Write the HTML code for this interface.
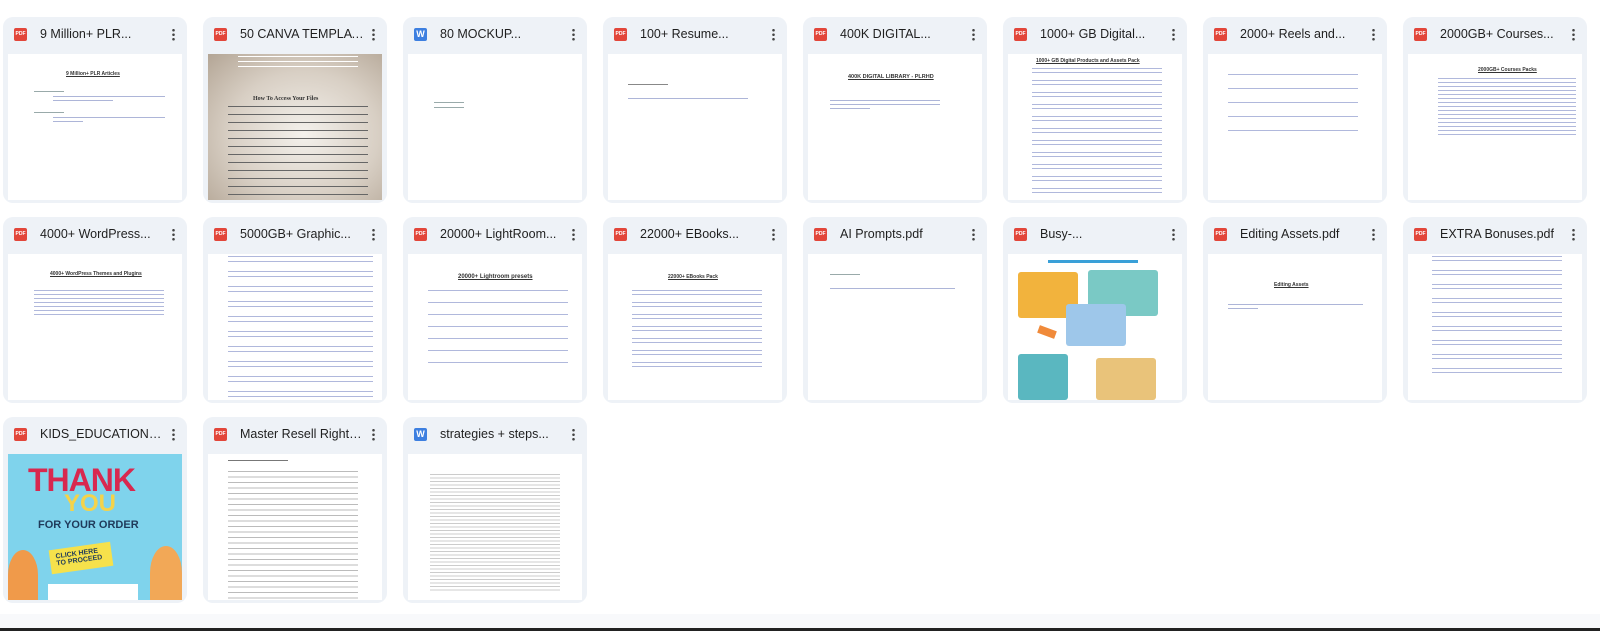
<!DOCTYPE html>
<html><head><meta charset="utf-8"><style>
*{box-sizing:border-box;margin:0;padding:0}
body{width:1600px;height:631px;background:#fff;font-family:"Liberation Sans",Arial,sans-serif;position:relative;overflow:hidden}
.card{position:absolute;width:184px;height:186px;background:#eef2f7;border-radius:10px}
.hd{position:absolute;left:0;top:0;width:184px;height:36px}
.ic{position:absolute;left:11px;top:11px;width:13px;height:13px;border-radius:2px;background:#e2463a;color:#fff;font-size:5px;font-weight:bold;text-align:center;line-height:13px}
.ic.w{background:#3d7fe0;font-size:9px}
.nm{position:absolute;left:37px;top:10px;width:124px;font-size:12.5px;color:#1f1f1f;white-space:nowrap;overflow:hidden;text-overflow:ellipsis}
.dots{position:absolute;right:12px;top:11px;width:3px;height:13px;background:radial-gradient(circle,#444 1.2px,transparent 1.4px) 0 0/3px 4.5px repeat-y}
.th{position:absolute;left:5px;top:37px;width:174px;height:146px;background:#fff;overflow:hidden}
.t{position:absolute;font-size:5px;color:#333;font-weight:bold;text-decoration:underline;white-space:nowrap}
.ln{position:absolute;height:1px;background:#8a96c8;opacity:.7}
.tx{position:absolute;background:repeating-linear-gradient(#9aa 0 1px,transparent 1px 5px)}
.foot{position:absolute;left:0;top:614px;width:1600px;height:14px;background:#f8f9fb}
.bar{position:absolute;left:0;top:628px;width:1600px;height:3px;background:#222}
</style></head><body>

<div class="card" style="left:3px;top:17px"><div class="hd"><div class="ic">PDF</div><div class="nm">9 Million+ PLR...</div><div class="dots"></div></div>
<div class="th"><div class="t" style="left:58px;top:17px">9 Million+ PLR Articles</div><div class="ln" style="left:45px;top:42px;width:112px"></div><div class="ln" style="left:45px;top:46px;width:60px"></div><div class="ln" style="left:45px;top:63px;width:112px"></div><div class="ln" style="left:45px;top:67px;width:30px"></div><div class="tx" style="left:26px;top:37px;width:30px;height:2px"></div><div class="tx" style="left:26px;top:58px;width:30px;height:2px"></div></div></div>

<div class="card" style="left:203px;top:17px"><div class="hd"><div class="ic">PDF</div><div class="nm">50 CANVA TEMPLATES</div><div class="dots"></div></div>
<div class="th" style="background:radial-gradient(ellipse at 55% 55%,#f4f1ec 0%,#d8cfc4 55%,#b3a595 100%)"><div style="position:absolute;left:45px;top:42px;font-size:6px;font-weight:bold;color:#333;font-family:'Liberation Serif',serif">How To Access Your Files</div><div class="tx" style="left:20px;top:52px;width:140px;height:92px;background:repeating-linear-gradient(#666 0 1px,transparent 1px 8px)"></div><div class="tx" style="left:30px;top:2px;width:120px;height:14px;background:repeating-linear-gradient(#fff 0 1px,transparent 1px 5px)"></div></div></div>

<div class="card" style="left:403px;top:17px"><div class="hd"><div class="ic w">W</div><div class="nm">80 MOCKUP...</div><div class="dots"></div></div>
<div class="th"><div class="tx" style="left:26px;top:48px;width:30px;height:6px"></div></div></div>

<div class="card" style="left:603px;top:17px"><div class="hd"><div class="ic">PDF</div><div class="nm">100+ Resume...</div><div class="dots"></div></div>
<div class="th"><div class="tx" style="left:20px;top:30px;width:40px;height:1px;background:#888"></div><div class="ln" style="left:20px;top:44px;width:120px"></div></div></div>

<div class="card" style="left:803px;top:17px"><div class="hd"><div class="ic">PDF</div><div class="nm">400K DIGITAL...</div><div class="dots"></div></div>
<div class="th"><div class="t" style="left:40px;top:20px;font-size:5.5px">400K DIGITAL LIBRARY - PLRHD</div><div class="ln" style="left:22px;top:46px;width:110px"></div><div class="ln" style="left:22px;top:50px;width:110px"></div><div class="ln" style="left:22px;top:54px;width:40px"></div></div></div>

<div class="card" style="left:1003px;top:17px"><div class="hd"><div class="ic">PDF</div><div class="nm">1000+ GB Digital...</div><div class="dots"></div></div>
<div class="th"><div class="t" style="left:28px;top:4px">1000+ GB Digital Products and Assets Pack</div><div class="tx" style="left:24px;top:14px;width:130px;height:132px;background:repeating-linear-gradient(#b0b8dc 0 1px,transparent 1px 4px,#b0b8dc 4px 5px,transparent 5px 12px)"></div></div></div>

<div class="card" style="left:1203px;top:17px"><div class="hd"><div class="ic">PDF</div><div class="nm">2000+ Reels and...</div><div class="dots"></div></div>
<div class="th"><div class="tx" style="left:20px;top:20px;width:130px;height:60px;background:repeating-linear-gradient(#b0b8dc 0 1px,transparent 1px 14px)"></div></div></div>

<div class="card" style="left:1403px;top:17px"><div class="hd"><div class="ic">PDF</div><div class="nm">2000GB+ Courses...</div><div class="dots"></div></div>
<div class="th"><div class="t" style="left:70px;top:13px">2000GB+ Courses Packs</div><div class="tx" style="left:30px;top:24px;width:138px;height:60px;background:repeating-linear-gradient(#b0b8dc 0 1px,transparent 1px 4px)"></div></div></div>

<div class="card" style="left:3px;top:217px"><div class="hd"><div class="ic">PDF</div><div class="nm">4000+ WordPress...</div><div class="dots"></div></div>
<div class="th"><div class="t" style="left:42px;top:17px">4000+ WordPress Themes and Plugins</div><div class="tx" style="left:26px;top:36px;width:130px;height:28px;background:repeating-linear-gradient(#b0b8dc 0 1px,transparent 1px 4px)"></div></div></div>

<div class="card" style="left:203px;top:217px"><div class="hd"><div class="ic">PDF</div><div class="nm">5000GB+ Graphic...</div><div class="dots"></div></div>
<div class="th"><div class="tx" style="left:20px;top:2px;width:145px;height:144px;background:repeating-linear-gradient(#b0b8dc 0 1px,transparent 1px 5px,#b0b8dc 5px 6px,transparent 6px 15px)"></div></div></div>

<div class="card" style="left:403px;top:217px"><div class="hd"><div class="ic">PDF</div><div class="nm">20000+ LightRoom...</div><div class="dots"></div></div>
<div class="th"><div class="t" style="left:50px;top:20px;font-size:6px">20000+ Lightroom presets</div><div class="tx" style="left:20px;top:36px;width:140px;height:80px;background:repeating-linear-gradient(#b0b8dc 0 1px,transparent 1px 12px)"></div></div></div>

<div class="card" style="left:603px;top:217px"><div class="hd"><div class="ic">PDF</div><div class="nm">22000+ EBooks...</div><div class="dots"></div></div>
<div class="th"><div class="t" style="left:60px;top:20px">22000+ EBooks Pack</div><div class="tx" style="left:24px;top:36px;width:130px;height:84px;background:repeating-linear-gradient(#b0b8dc 0 1px,transparent 1px 4px,#b0b8dc 4px 5px,transparent 5px 12px)"></div></div></div>

<div class="card" style="left:803px;top:217px"><div class="hd"><div class="ic">PDF</div><div class="nm">AI Prompts.pdf</div><div class="dots"></div></div>
<div class="th"><div class="tx" style="left:22px;top:20px;width:30px;height:2px"></div><div class="ln" style="left:22px;top:34px;width:125px"></div></div></div>

<div class="card" style="left:1003px;top:217px"><div class="hd"><div class="ic">PDF</div><div class="nm">Busy-...</div><div class="dots"></div></div>
<div class="th"><div style="position:absolute;left:40px;top:6px;width:90px;height:3px;background:#3aa0d8"></div>
<div style="position:absolute;left:10px;top:18px;width:60px;height:46px;background:#f2b33d;border-radius:3px"></div>
<div style="position:absolute;left:80px;top:16px;width:70px;height:46px;background:#7ac9c5;border-radius:3px"></div>
<div style="position:absolute;left:58px;top:50px;width:60px;height:42px;background:#9ec7ea;border-radius:3px"></div>
<div style="position:absolute;left:10px;top:100px;width:50px;height:46px;background:#5ab7c0;border-radius:3px"></div>
<div style="position:absolute;left:88px;top:104px;width:60px;height:42px;background:#e9c37a;border-radius:3px"></div>
<div style="position:absolute;left:30px;top:74px;width:18px;height:8px;background:#f08a3a;transform:rotate(20deg)"></div></div></div>

<div class="card" style="left:1203px;top:217px"><div class="hd"><div class="ic">PDF</div><div class="nm">Editing Assets.pdf</div><div class="dots"></div></div>
<div class="th"><div class="t" style="left:66px;top:28px">Editing Assets</div><div class="ln" style="left:20px;top:50px;width:135px"></div><div class="ln" style="left:20px;top:54px;width:30px"></div></div></div>

<div class="card" style="left:1403px;top:217px"><div class="hd"><div class="ic">PDF</div><div class="nm">EXTRA Bonuses.pdf</div><div class="dots"></div></div>
<div class="th"><div class="tx" style="left:24px;top:2px;width:130px;height:125px;background:repeating-linear-gradient(#b0b8dc 0 1px,transparent 1px 4px,#b0b8dc 4px 5px,transparent 5px 14px)"></div></div></div>

<div class="card" style="left:3px;top:417px"><div class="hd"><div class="ic">PDF</div><div class="nm">KIDS_EDUCATIONAL_PACK</div><div class="dots"></div></div>
<div class="th" style="background:#7fd3ec"><div style="position:absolute;left:20px;top:8px;font-size:32px;font-weight:bold;color:#d8284f;letter-spacing:-1px">THANK</div><div style="position:absolute;left:56px;top:36px;font-size:24px;font-weight:bold;color:#f4d34a">YOU</div><div style="position:absolute;left:30px;top:65px;font-size:11px;font-weight:bold;color:#1f3a5a">FOR YOUR ORDER</div><div style="position:absolute;left:42px;top:92px;width:62px;height:24px;background:#f6e14b;transform:rotate(-8deg);font-size:7px;font-weight:bold;color:#1f3a5a;padding:4px 6px">CLICK HERE TO PROCEED</div><div style="position:absolute;left:0;top:96px;width:30px;height:50px;background:#f09a4a;border-radius:50% 50% 0 0"></div><div style="position:absolute;left:142px;top:92px;width:32px;height:54px;background:#f2a857;border-radius:50% 50% 0 0"></div><div style="position:absolute;left:40px;top:130px;width:90px;height:16px;background:#fff"></div></div></div>

<div class="card" style="left:203px;top:417px"><div class="hd"><div class="ic">PDF</div><div class="nm">Master Resell Rights...</div><div class="dots"></div></div>
<div class="th"><div class="tx" style="left:20px;top:6px;width:60px;height:1px;background:#777"></div><div class="tx" style="left:20px;top:17px;width:130px;height:129px;background:repeating-linear-gradient(#bbb 0 1px,transparent 1px 5.5px)"></div></div></div>

<div class="card" style="left:403px;top:417px"><div class="hd"><div class="ic w">W</div><div class="nm">strategies + steps...</div><div class="dots"></div></div>
<div class="th"><div class="tx" style="left:22px;top:20px;width:130px;height:118px;background:repeating-linear-gradient(#ccc 0 1px,transparent 1px 3.5px)"></div></div></div>

<div class="foot"></div><div class="bar"></div>
</body></html>
